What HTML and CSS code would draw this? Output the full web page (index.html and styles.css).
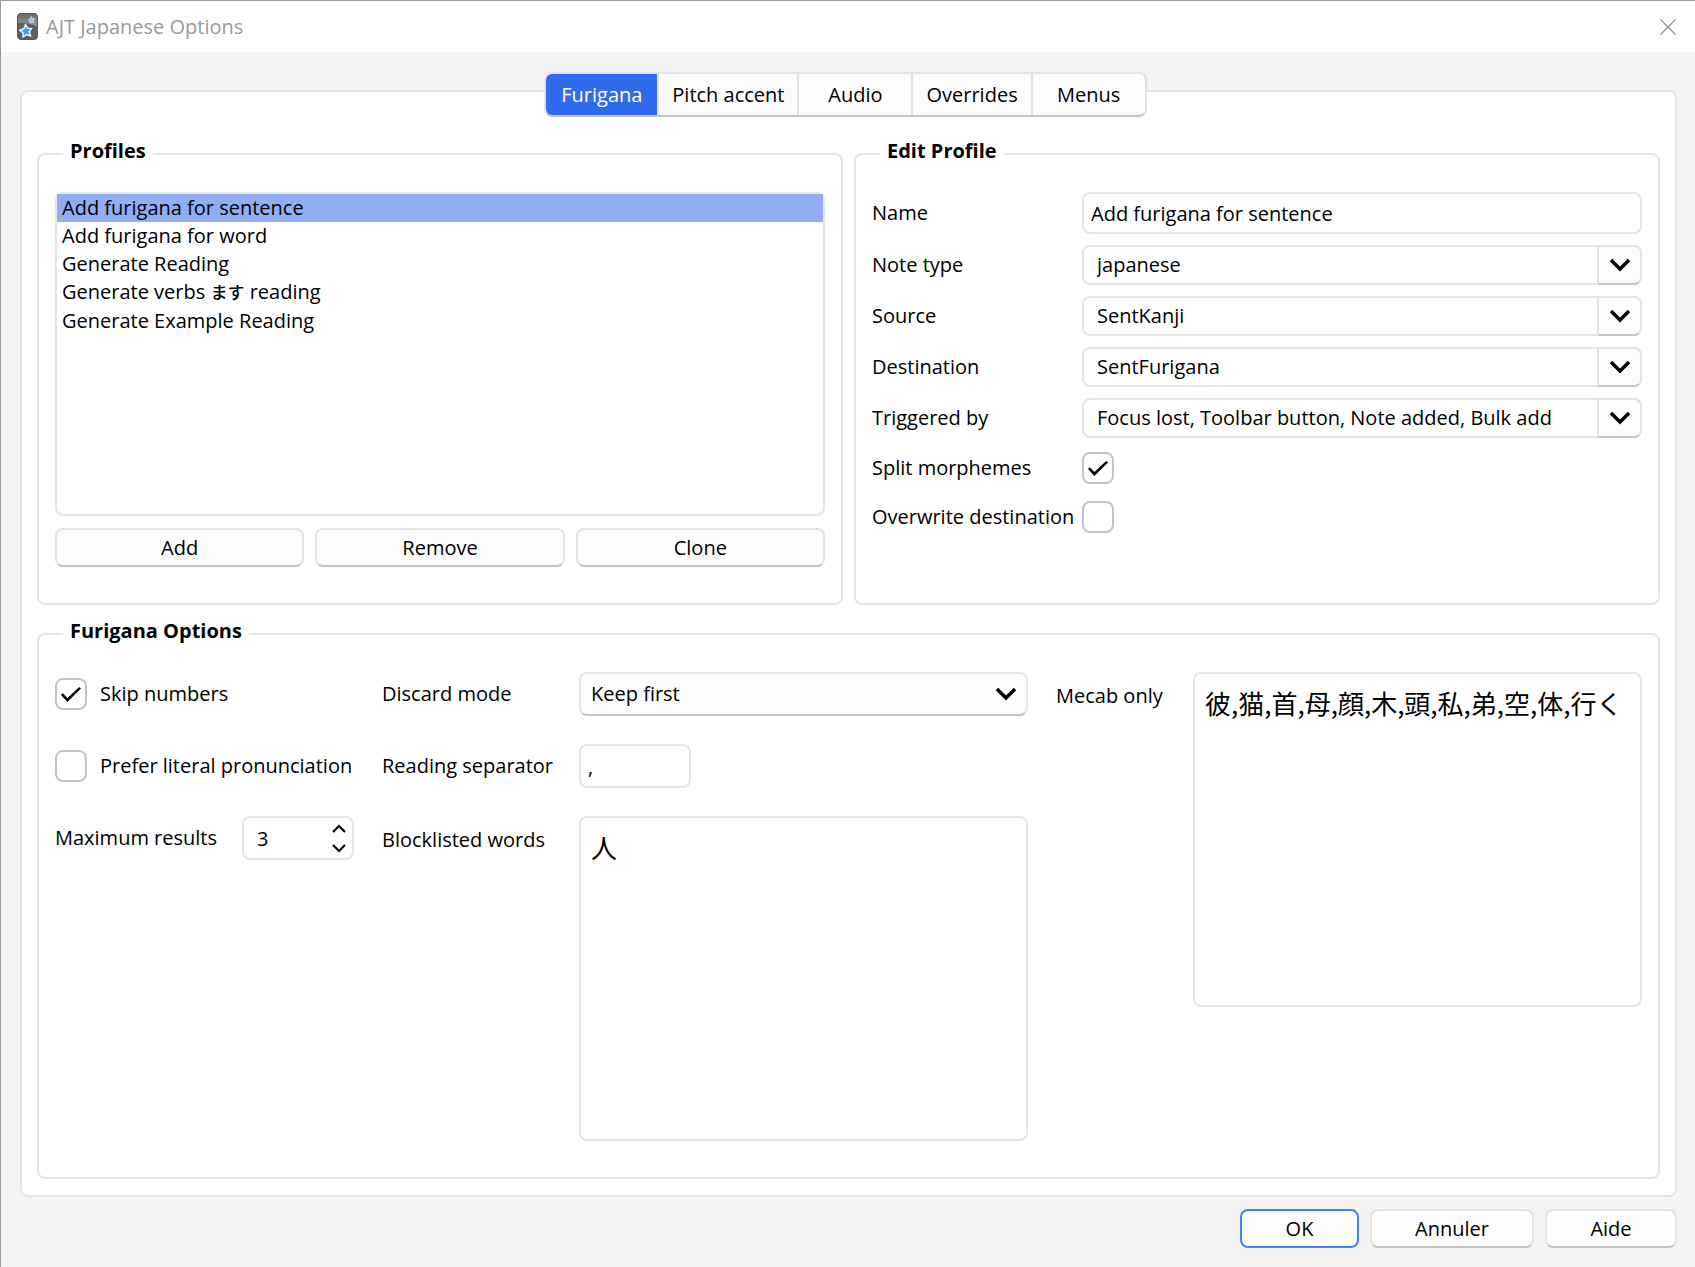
FILE: index.html
```html
<!DOCTYPE html>
<html lang="en">
<head>
    <meta charset="UTF-8">
    <meta name="viewport" content="width=device-width, initial-scale=1.0">
    <title>AJT Japanese Options</title>
    <link rel="stylesheet" href="styles.css">
</head>
<body>
    <!-- Shared arrow shapes -->
    <svg class="symbols" width="0" height="0" aria-hidden="true">
        <symbol id="arrow-down" viewBox="0 0 22 14">
            <path d="M2 2 L11 11 L20 2" fill="none" stroke="#000" stroke-width="3.4"/>
        </symbol>
        <symbol id="arrow-small-up" viewBox="0 0 14 9">
            <path d="M1 8 L7 2 L13 8" fill="none" stroke="#000" stroke-width="2.2"/>
        </symbol>
        <symbol id="arrow-small-down" viewBox="0 0 14 9">
            <path d="M1 1 L7 7 L13 1" fill="none" stroke="#000" stroke-width="2.2"/>
        </symbol>
    </svg>

    <header class="titlebar">
        <svg class="app-icon" viewBox="0 0 21 27" aria-hidden="true">
            <defs>
                <linearGradient id="card" x1="0" y1="0" x2="0" y2="1">
                    <stop offset="0" stop-color="#666"/>
                    <stop offset="1" stop-color="#999"/>
                </linearGradient>
            </defs>
            <rect x="0.5" y="0.5" width="20" height="26" rx="3.5" fill="#5e5e5e"/>
            <path d="M0.5 10 Q10 9 20.5 14 V4 Q20.5 0.5 17 0.5 H4 Q0.5 0.5 0.5 4 Z" fill="url(#card)"/>
            <rect x="0.5" y="0.5" width="20" height="26" rx="3.5" fill="none" stroke="#555"/>
            <path d="M8.6 11.5 L10.6 15.2 L14.8 15.4 L12.2 18.8 L13.8 23 L9.5 21.6 L6 24 L6 19.8 L2.6 17.2 L6.8 15.8 Z" fill="#3da5ee" stroke="#e4f3ff" stroke-width="1.5" stroke-linejoin="round"/>
            <path d="M14.4 3.6 L15.4 5.4 L17.6 5.6 L16.4 7.4 L17 9.4 L14.8 8.8 L13 10 L13 8 L11.4 6.6 L13.6 5.8 Z" fill="#79c4f5" stroke="#d8eefc" stroke-width="0.8" stroke-linejoin="round"/>
        </svg>
        <h1 class="title">AJT Japanese Options</h1>
        <button class="close-btn" type="button" aria-label="Close">
            <svg width="16" height="16" viewBox="0 0 16 16"><path d="M0.5 0.5 L15.5 15.5 M15.5 0.5 L0.5 15.5" stroke="#8c8c8c" stroke-width="1.1"/></svg>
        </button>
    </header>

    <main class="dialog">
        <div class="tabs" role="tablist">
            <button class="tab active" type="button" role="tab" aria-selected="true">Furigana</button>
            <button class="tab" type="button" role="tab">Pitch accent</button>
            <button class="tab" type="button" role="tab">Audio</button>
            <button class="tab" type="button" role="tab">Overrides</button>
            <button class="tab" type="button" role="tab">Menus</button>
        </div>

        <div class="panel" role="tabpanel">
            <div class="columns">
                <fieldset class="group">
                    <legend>Profiles</legend>
                    <div class="profiles">
                        <ul class="profile-list" role="listbox" aria-label="Profiles">
                            <li class="selected" role="option" aria-selected="true">Add furigana for sentence</li>
                            <li role="option">Add furigana for word</li>
                            <li role="option">Generate Reading</li>
                            <li role="option">Generate verbs <span class="kana" lang="ja">ます</span> reading</li>
                            <li role="option">Generate Example Reading</li>
                        </ul>
                        <div class="profile-buttons">
                            <button class="btn" type="button">Add</button>
                            <button class="btn" type="button">Remove</button>
                            <button class="btn" type="button">Clone</button>
                        </div>
                    </div>
                </fieldset>

                <fieldset class="group">
                    <legend>Edit Profile</legend>
                    <div class="edit-form">
                        <label for="name">Name</label>
                        <input class="field name-field" id="name" type="text" value="Add furigana for sentence">

                        <label for="note-type">Note type</label>
                        <div class="combo">
                            <select class="field" id="note-type"><option>japanese</option></select>
                            <span class="combo-arrow"><svg><use href="#arrow-down"/></svg></span>
                        </div>

                        <label for="source">Source</label>
                        <div class="combo">
                            <select class="field" id="source"><option>SentKanji</option></select>
                            <span class="combo-arrow"><svg><use href="#arrow-down"/></svg></span>
                        </div>

                        <label for="destination">Destination</label>
                        <div class="combo">
                            <select class="field" id="destination"><option>SentFurigana</option></select>
                            <span class="combo-arrow"><svg><use href="#arrow-down"/></svg></span>
                        </div>

                        <label for="triggered-by">Triggered by</label>
                        <div class="combo">
                            <select class="field" id="triggered-by"><option>Focus lost, Toolbar button, Note added, Bulk add</option></select>
                            <span class="combo-arrow"><svg><use href="#arrow-down"/></svg></span>
                        </div>

                        <label for="split">Split morphemes</label>
                        <div class="check-row"><input class="check" id="split" type="checkbox" checked></div>

                        <label for="overwrite">Overwrite destination</label>
                        <div class="check-row"><input class="check" id="overwrite" type="checkbox"></div>
                    </div>
                </fieldset>
            </div>

            <fieldset class="group options-group">
                <legend>Furigana Options</legend>
                <div class="options">
                    <div class="option-row">
                        <input class="check" id="skip-numbers" type="checkbox" checked>
                        <label for="skip-numbers">Skip numbers</label>
                    </div>
                    <label for="discard-mode">Discard mode</label>
                    <div class="combo combo-button">
                        <select class="field" id="discard-mode"><option>Keep first</option></select>
                        <span class="combo-arrow"><svg><use href="#arrow-down"/></svg></span>
                    </div>
                    <label class="words-label mecab-label" for="mecab-only">Mecab only</label>
                    <textarea class="field words mecab-words" id="mecab-only" lang="ja">彼,猫,首,母,顔,木,頭,私,弟,空,体,行く</textarea>

                    <div class="option-row">
                        <input class="check" id="literal" type="checkbox">
                        <label for="literal">Prefer literal pronunciation</label>
                    </div>
                    <label for="separator">Reading separator</label>
                    <input class="field separator" id="separator" type="text" value=", " lang="ja">

                    <div class="option-row max-results">
                        <label for="max-results">Maximum results</label>
                        <div class="spin">
                            <input class="field" id="max-results" type="number" value="3">
                            <div class="spin-buttons">
                                <button type="button" aria-label="Increase"><svg><use href="#arrow-small-up"/></svg></button>
                                <button type="button" aria-label="Decrease"><svg><use href="#arrow-small-down"/></svg></button>
                            </div>
                        </div>
                    </div>
                    <label class="words-label" for="blocklist">Blocklisted words</label>
                    <textarea class="field words block-words" id="blocklist" lang="ja">人</textarea>
                </div>
            </fieldset>
        </div>

        <footer class="dialog-buttons">
            <button class="btn btn-default" type="button">OK</button>
            <button class="btn btn-cancel" type="button">Annuler</button>
            <button class="btn btn-help" type="button">Aide</button>
        </footer>
    </main>
</body>
</html>
```
FILE: styles.css
```css
* {
    box-sizing: border-box;
}

body {
    margin: 0;
    min-height: 100vh;
    display: flex;
    flex-direction: column;
    background: #f4f4f4;
    border-top: 1px solid #999;
    border-left: 1px solid #999;
    color: #000;
    font-family: "Open Sans", "Noto Sans CJK JP", sans-serif;
    font-size: 20px;
    line-height: 28px;
}

button,
input,
select,
textarea {
    font: inherit;
    color: inherit;
}

.symbols {
    position: absolute;
}

/* Title bar */
.titlebar {
    display: flex;
    align-items: center;
    height: 51px;
    padding: 0 19px 0 16px;
    background: #fff;
}

.app-icon {
    width: 21px;
    height: 27px;
}

.title {
    flex: 1;
    margin: 0 0 0 8px;
    color: #999;
    font-size: 20px;
    font-weight: 400;
}

.close-btn {
    display: flex;
    padding: 0;
    border: none;
    background: none;
}

.dialog {
    flex: 1;
    display: flex;
    flex-direction: column;
    padding: 20px 18px 19px 19px;
}

/* Tabs sit on the top edge of the panel */
.tabs {
    position: relative;
    z-index: 1;
    display: flex;
    align-self: center;
    margin-right: 6px;
    margin-bottom: -27px;
    border: 2px solid #e3e3e3;
    border-bottom-color: #c4c4c4;
    border-radius: 8px;
    background: #fcfcfc;
    overflow: hidden;
}

.tab {
    min-width: 114px;
    height: 41px;
    padding: 0 13px;
    border: none;
    border-left: 2px solid #e3e3e3;
    background: none;
}

.tab.active {
    min-width: 111px;
    border-left: none;
    background: #306bec;
    color: #fff;
}

.panel {
    flex: 1;
    display: flex;
    flex-direction: column;
    gap: 15px;
    padding: 48px 15px 16px;
    border: 2px solid #e5e5e5;
    border-radius: 8px;
    background: #fff;
}

.columns {
    display: grid;
    grid-template-columns: 1fr 1fr;
    gap: 11px;
}

.group {
    min-width: 0;
    margin: 0;
    padding: 24px 16px 36px;
    border: 2px solid #e5e5e5;
    border-radius: 8px;
}

.group legend {
    margin-left: 8px;
    padding: 0 7px 6px;
    font-weight: 700;
    line-height: 22px;
}

.options-group {
    flex: 1;
}

/* Profiles */
.profiles {
    display: flex;
    flex-direction: column;
    gap: 12px;
    height: 100%;
}

.profile-list {
    flex: 1;
    min-height: 324px;
    margin: 0;
    padding: 0;
    border: 2px solid #e5e5e5;
    border-radius: 8px;
    list-style: none;
}

.profile-list li {
    padding-left: 5px;
}

.profile-list .selected {
    background: #91aef5;
}

.kana {
    font-size: 17px;
    font-weight: 500;
}

.profile-buttons {
    display: grid;
    grid-template-columns: repeat(3, 1fr);
    gap: 11px;
}

.btn {
    height: 39px;
    padding: 0;
    border: 2px solid #e3e3e3;
    border-bottom-color: #c4c4c4;
    border-radius: 8px;
    background: #fcfcfc;
}

/* Form controls */
.field {
    width: 100%;
    height: 40px;
    margin: 0;
    padding: 0 7px;
    border: 2px solid #e5e5e5;
    border-radius: 8px;
    background: #fff;
    appearance: none;
    outline: none;
}

.combo {
    position: relative;
}

.combo .field {
    display: block;
    padding: 0 50px 0 13px;
}

.combo-arrow {
    position: absolute;
    top: 0;
    right: 0;
    display: flex;
    align-items: center;
    justify-content: center;
    width: 45px;
    height: 100%;
    border: 2px solid #e3e3e3;
    border-bottom-color: #c4c4c4;
    border-radius: 0 8px 8px 0;
    background: #fcfcfc;
    pointer-events: none;
}

.combo-arrow svg {
    width: 22px;
    height: 14px;
}

.combo-button .field {
    height: 44px;
    padding-left: 10px;
    background: #fcfcfc;
    border-bottom-color: #c4c4c4;
}

.combo-button .combo-arrow {
    border-color: transparent;
    background: none;
}

.check {
    position: relative;
    flex: none;
    width: 32px;
    height: 32px;
    margin: 0;
    border: 2px solid #c4c4c4;
    border-radius: 8px;
    background: #fff;
    appearance: none;
}

.check:checked::after {
    content: "";
    position: absolute;
    inset: 7px 4px 6px 4px;
    background: #000;
    clip-path: polygon(0 53%, 9% 42%, 32% 74%, 91% 0, 100% 10%, 32% 100%);
}

.edit-form {
    display: grid;
    grid-template-columns: 199px 1fr;
    align-items: center;
    gap: 11px;
}

.edit-form label {
    white-space: nowrap;
}

.name-field {
    height: 42px;
}

.check-row {
    display: flex;
    align-items: center;
    height: 38px;
}

/* Furigana options */
.options {
    display: grid;
    grid-template-columns: 299px 169px 1fr 109px 1fr;
    grid-template-rows: 44px 44px auto;
    gap: 28px;
    align-items: start;
}

.options label {
    line-height: 44px;
    white-space: nowrap;
}

.option-row {
    grid-column: 1;
    display: flex;
    align-items: center;
    gap: 13px;
    height: 44px;
}

.max-results {
    justify-content: space-between;
}

.options .words-label {
    padding-top: 2px;
}

.mecab-label {
    grid-column: 4;
    grid-row: 1;
}

.words {
    padding: 12px 10px;
    font-size: 26px;
    line-height: 34px;
    font-family: "Noto Sans CJK JP", sans-serif;
    resize: none;
}

.mecab-words {
    grid-column: 5;
    grid-row: 1 / span 3;
    height: 335px;
}

.block-words {
    height: 325px;
}

.separator {
    width: 112px;
    height: 44px;
}

.spin {
    position: relative;
    width: 112px;
}

.spin .field {
    display: block;
    height: 44px;
    padding: 0 40px 0 13px;
    appearance: textfield;
}

.spin-buttons {
    position: absolute;
    top: 2px;
    right: 8px;
    display: flex;
    flex-direction: column;
    height: 40px;
}

.spin-buttons button {
    flex: 1;
    display: flex;
    align-items: center;
    padding: 0;
    border: none;
    background: none;
}

.spin-buttons svg {
    width: 14px;
    height: 9px;
}

/* Bottom buttons */
.dialog-buttons {
    display: flex;
    justify-content: flex-end;
    gap: 11px;
    margin-top: 12px;
}

.btn-default {
    width: 119px;
    border-color: #3f85f7;
}

.btn-cancel {
    width: 164px;
}

.btn-help {
    width: 132px;
}
```
